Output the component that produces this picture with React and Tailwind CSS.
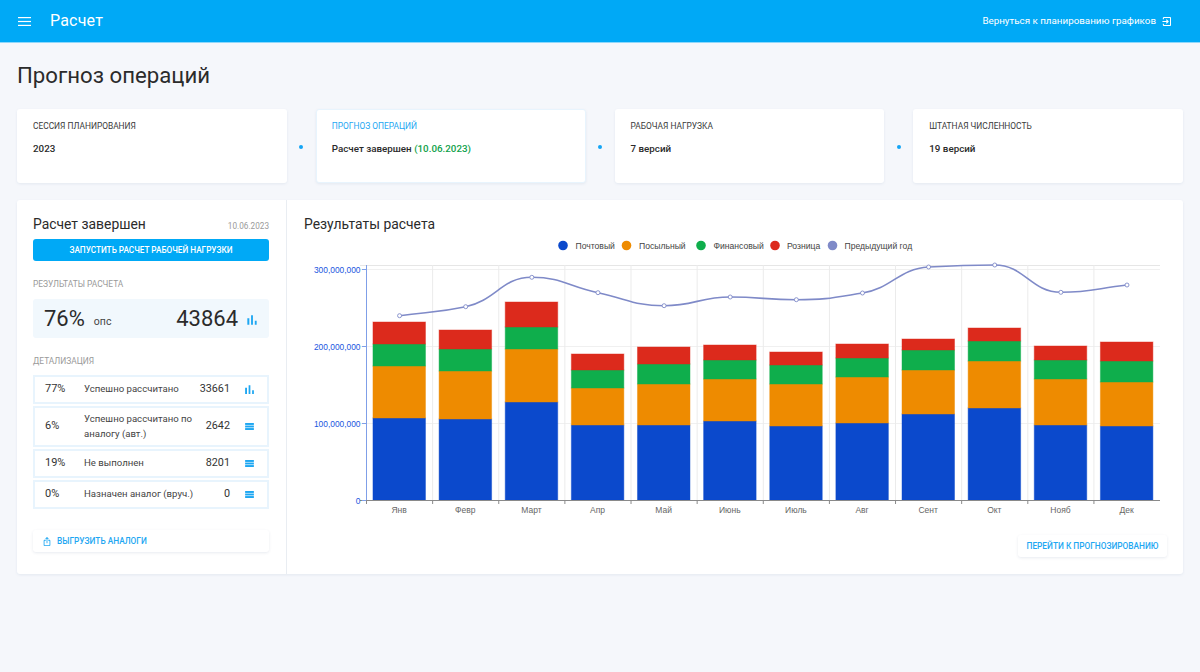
import React from "react";

const months = ["Янв","Февр","Март","Апр","Май","Июнь","Июль","Авг","Сент","Окт","Нояб","Дек"];
const tops = [
  [418,366,344,322],[419,371,349,330],[402,349,327,302],[425,388,370,354],
  [425,384,364,347],[421,379,360,345],[426,384,365,352],[423,377,358,344],
  [414,370,350,339],[408,361,341,328],[425,379,360,346],[426,382,361,342],
];
const colors = ["#0b49cc","#ee8b00","#0fae4c","#dc2a1c"];
const lineY = [315.7,306.7,277.3,292.7,305.7,297,299.7,293,267,265,292.3,285];
const X0 = 366.5, CW = 66.13;
const cx = (i) => X0 + CW * (i + 0.5);

function monotone(pts) {
  const n = pts.length;
  const s = [];
  for (let i = 0; i < n - 1; i++) s.push((pts[i + 1][1] - pts[i][1]) / (pts[i + 1][0] - pts[i][0]));
  const m = pts.map((_, i) => {
    if (i === 0) return s[0];
    if (i === n - 1) return s[n - 2];
    if (s[i - 1] * s[i] <= 0) return 0;
    return (2 * s[i - 1] * s[i]) / (s[i - 1] + s[i]);
  });
  let d = `M${pts[0][0]} ${pts[0][1]}`;
  for (let i = 0; i < n - 1; i++) {
    const h = (pts[i + 1][0] - pts[i][0]) / 2.2;
    d += ` C${pts[i][0] + h} ${pts[i][1] + m[i] * h} ${pts[i + 1][0] - h} ${pts[i + 1][1] - m[i + 1] * h} ${pts[i + 1][0]} ${pts[i + 1][1]}`;
  }
  return d;
}

const BarIcon = ({ className }) => (
  <svg viewBox="0 0 24 24" fill="currentColor" className={className}>
    <path d="M5 9.2h3V19H5zM10.6 5h2.8v14h-2.8zm5.6 8H19v6h-2.8z" />
  </svg>
);
const TableIcon = () => (
  <svg viewBox="0 0 10 8" fill="currentColor" className="w-[9px] h-[7px] text-[#1ea7f2]">
    <rect x="0" y="0" width="10" height="2.2" />
    <rect x="0" y="2.9" width="10" height="2.2" />
    <rect x="0" y="5.8" width="10" height="2.2" />
  </svg>
);

const Stage = ({ title, value, active }) => (
  <div className={`flex-1 h-[74px] bg-white rounded-[3px] shadow-[0_1px_3px_rgba(30,60,110,0.08)] pl-[15px] pt-[11px] border ${active ? "border-[#e8f4fd]" : "border-transparent"}`}>
    <div className={`text-[8.4px] leading-[11px] h-[11px] whitespace-nowrap ${active ? "text-[#1ea7f2]" : "text-[#3a3a3a]"}`}>{title}</div>
    <div className="mt-[10px] text-[9.8px] leading-[13px] font-medium text-[#2a2a2a] whitespace-nowrap">{value}</div>
  </div>
);
const Dot = () => (
  <div className="w-[29px] h-[74px] flex items-center justify-center pt-[1px]">
    <div className="w-[4px] h-[4px] rounded-full bg-[#14a5f5]" />
  </div>
);

const Row = ({ pct, label, val, icon, tall }) => (
  <div className={`flex items-center border-2 border-[#e8f4fd] pl-[10px] ${tall ? "h-[41px]" : "h-[29px]"}`}>
    <div className="w-[39px] text-[11px] text-[#333]">{pct}</div>
    <div className="w-[114px] text-[9.6px] leading-[14.5px] text-[#444]">{label}</div>
    <div className="flex-1 text-right text-[10.8px] text-[#333]">{val}</div>
    <div className="w-[37px] pl-[15px] flex items-center">{icon}</div>
  </div>
);

export default function App() {
  const pts = lineY.map((y, i) => [cx(i), y]);
  const legend = [
    ["Почтовый", "#0b49cc", 563, 575.5],
    ["Посыльный", "#ee8b00", 626.5, 639],
    ["Финансовый", "#0fae4c", 701, 713.5],
    ["Розница", "#dc2a1c", 775, 787],
    ["Предыдущий год", "#7f8ac8", 832.5, 844.5],
  ];
  return (
    <div className="min-h-[672px] bg-[#f5f7fb] font-['Roboto',sans-serif]">
      <header className="h-[43px] bg-[#00a9f6] border-b border-[#8fd8fb] flex items-center pl-[18px] pr-[29px] text-white">
        <svg viewBox="0 0 13 9" className="w-[13px] h-[9px]" fill="currentColor">
          <rect y="0" width="13" height="1.2" /><rect y="3.9" width="13" height="1.2" /><rect y="7.8" width="13" height="1.2" />
        </svg>
        <div className="ml-[19px] text-[16px] tracking-[0.2px]">Расчет</div>
        <div className="ml-auto text-[9.8px] whitespace-nowrap">Вернуться к планированию графиков</div>
        <svg viewBox="0 0 10 10" className="ml-[6px] w-[9px] h-[9px]" fill="none" stroke="currentColor" strokeWidth="1.2">
          <path d="M1.5 2.5V1.5a1 1 0 0 1 1-1h6a1 1 0 0 1 1 1v7a1 1 0 0 1-1 1h-6a1 1 0 0 1-1-1V7.5" />
          <path d="M0.5 5H6.5M4.8 3L6.8 5L4.8 7" />
        </svg>
      </header>

      <main className="px-[17px]">
        <h1 className="pt-[18px] h-[66px] text-[22.2px] leading-[28px] text-[#2b2b2b]">Прогноз операций</h1>

        <div className="flex">
          <Stage title="СЕССИЯ ПЛАНИРОВАНИЯ" value="2023" />
          <Dot />
          <Stage active title="ПРОГНОЗ ОПЕРАЦИЙ" value={<>Расчет завершен <span className="text-[#0fa14a]">(10.06.2023)</span></>} />
          <Dot />
          <Stage title="РАБОЧАЯ НАГРУЗКА" value="7 версий" />
          <Dot />
          <Stage title="ШТАТНАЯ ЧИСЛЕННОСТЬ" value="19 версий" />
        </div>

        <section className="mt-[17px] h-[374px] bg-white rounded-[3px] shadow-[0_1px_3px_rgba(30,60,110,0.08)] flex">
          <div className="w-[270px] shrink-0 border-r border-[#e9edf2] pl-[16px] pr-[17px]">
            <div className="flex items-baseline justify-between h-[39px] pt-[14px]">
              <div className="text-[13.9px] leading-[20px] text-[#2b2b2b]">Расчет завершен</div>
              <div className="text-[8.2px] text-[#9a9a9a]">10.06.2023</div>
            </div>
            <div className="h-[22px] bg-[#00a9f6] rounded-[3px] flex items-center justify-center text-white text-[8.2px] font-medium whitespace-nowrap">
              ЗАПУСТИТЬ РАСЧЕТ РАБОЧЕЙ НАГРУЗКИ
            </div>
            <div className="mt-[18px] text-[8.4px] leading-[11px] text-[#9a9a9a]">РЕЗУЛЬТАТЫ РАСЧЕТА</div>
            <div className="mt-[9px] h-[39px] bg-[#f1f8fd] rounded-[3px] flex items-center pl-[11px] pr-[9px]">
              <div className="text-[22px] text-[#2b2b2b] leading-[28px]">76%</div>
              <div className="ml-[9px] mt-[6px] text-[10.5px] text-[#444]">опс</div>
              <div className="ml-auto text-[22px] text-[#2b2b2b] leading-[28px]">43864</div>
              <BarIcon className="ml-[6px] mt-[3px] w-[16px] h-[16px] text-[#1ea7f2]" />
            </div>
            <div className="mt-[18px] text-[8.4px] leading-[11px] text-[#9a9a9a]">ДЕТАЛИЗАЦИЯ</div>
            <div className="mt-[8px] flex flex-col gap-[2px]">
              <Row pct="77%" label="Успешно рассчитано" val="33661" icon={<BarIcon className="-ml-[3px] w-[15px] h-[15px] text-[#1ea7f2]" />} />
              <Row tall pct="6%" label="Успешно рассчитано по аналогу (авт.)" val="2642" icon={<TableIcon />} />
              <Row pct="19%" label="Не выполнен" val="8201" icon={<TableIcon />} />
              <Row pct="0%" label="Назначен аналог (вруч.)" val="0" icon={<TableIcon />} />
            </div>
            <div className="mt-[21px] h-[22px] rounded-[3px] bg-white shadow-[0_1px_3px_rgba(30,60,110,0.1)] flex items-center pl-[9px] text-[#1ea7f2]">
              <svg viewBox="0 0 24 24" fill="currentColor" className="w-[10px] h-[11px]">
                <path d="M16 5l-1.42 1.42-1.59-1.59V16h-1.98V4.83L9.42 6.42 8 5l4-4 4 4zm4 5v11c0 1.1-.9 2-2 2H6c-1.11 0-2-.9-2-2V10c0-1.11.89-2 2-2h3v2H6v11h12V10h-3V8h3c1.1 0 2 .89 2 2z" />
              </svg>
              <span className="ml-[5px] text-[8.3px] font-medium whitespace-nowrap">ВЫГРУЗИТЬ АНАЛОГИ</span>
            </div>
          </div>

          <div className="flex-1 flex flex-col">
            <div className="pl-[17px] pt-[14px] h-[36px] text-[13.9px] leading-[20px] text-[#2b2b2b]">Результаты расчета</div>
            <svg viewBox="287 236 896 285" className="w-[896px] h-[285px]" style={{ fontFamily: "'Liberation Sans', Arial, sans-serif" }}>
              {legend.map(([t, c, dx, tx]) => (
                <g key={t}>
                  <circle cx={dx} cy="245.5" r="4.8" fill={c} />
                  <text x={tx} y="248.5" fontSize="8.6" fill="#444">{t}</text>
                </g>
              ))}
              {[265, 269, 346, 423].map((y) => (
                <line key={y} x1="360" x2="1160" y1={y + 0.5} y2={y + 0.5} stroke={y === 265 ? "#e6e6e6" : "#f0f0f0"} />
              ))}
              {months.map((_, i) => i > 0 && (
                <line key={i} x1={X0 + CW * i} x2={X0 + CW * i} y1="265" y2="500" stroke="#ebebeb" />
              ))}
              {tops.map((t, i) => {
                const x = cx(i) - 26.6;
                const bottoms = [500, t[0], t[1], t[2]];
                return t.map((top, k) => (
                  <rect key={`${i}${k}`} x={x} y={top} width="52.5" height={bottoms[k] - top}
                    fill={colors[k]} stroke={colors[k]} strokeOpacity="0.45" strokeWidth="1" />
                ));
              })}
              <line x1="366.5" x2="366.5" y1="265" y2="500" stroke="#7f9fe8" strokeWidth="1" />
              <line x1="360" x2="1160" y1="500.5" y2="500.5" stroke="#8a8a8a" />
              {months.map((_, i) => (
                <line key={i} x1={X0 + CW * i} x2={X0 + CW * i} y1="500" y2="504" stroke="#8a8a8a" />
              ))}
              {[[269,"300,000,000"],[346,"200,000,000"],[423,"100,000,000"],[500,"0"]].map(([y, t]) => (
                <g key={t}>
                  <line x1="362" x2="366" y1={y + 0.5} y2={y + 0.5} stroke="#7f9fe8" />
                  <text x="360.5" y={y + 3.5} textAnchor="end" fontSize="8.4" fill="#1a56e0">{t}</text>
                </g>
              ))}
              {months.map((m, i) => (
                <text key={m} x={cx(i) - 0.4} y="513" textAnchor="middle" fontSize="8.5" fill="#666">{m}</text>
              ))}
              <path d={monotone(pts)} fill="none" stroke="#7f8ac8" strokeWidth="1.6" />
              {pts.map(([x, y], i) => (
                <circle key={i} cx={x} cy={y} r="2" fill="#fff" stroke="#7f8ac8" strokeWidth="0.9" />
              ))}
            </svg>
            <div className="flex justify-end pr-[16px] mt-[14px]">
              <div className="h-[22px] w-[149px] rounded-[3px] bg-white shadow-[0_1px_3px_rgba(30,60,110,0.1)] flex items-center justify-center text-[#1ea7f2] text-[8.3px] font-medium whitespace-nowrap">
                ПЕРЕЙТИ К ПРОГНОЗИРОВАНИЮ
              </div>
            </div>
          </div>
        </section>
      </main>
    </div>
  );
}
